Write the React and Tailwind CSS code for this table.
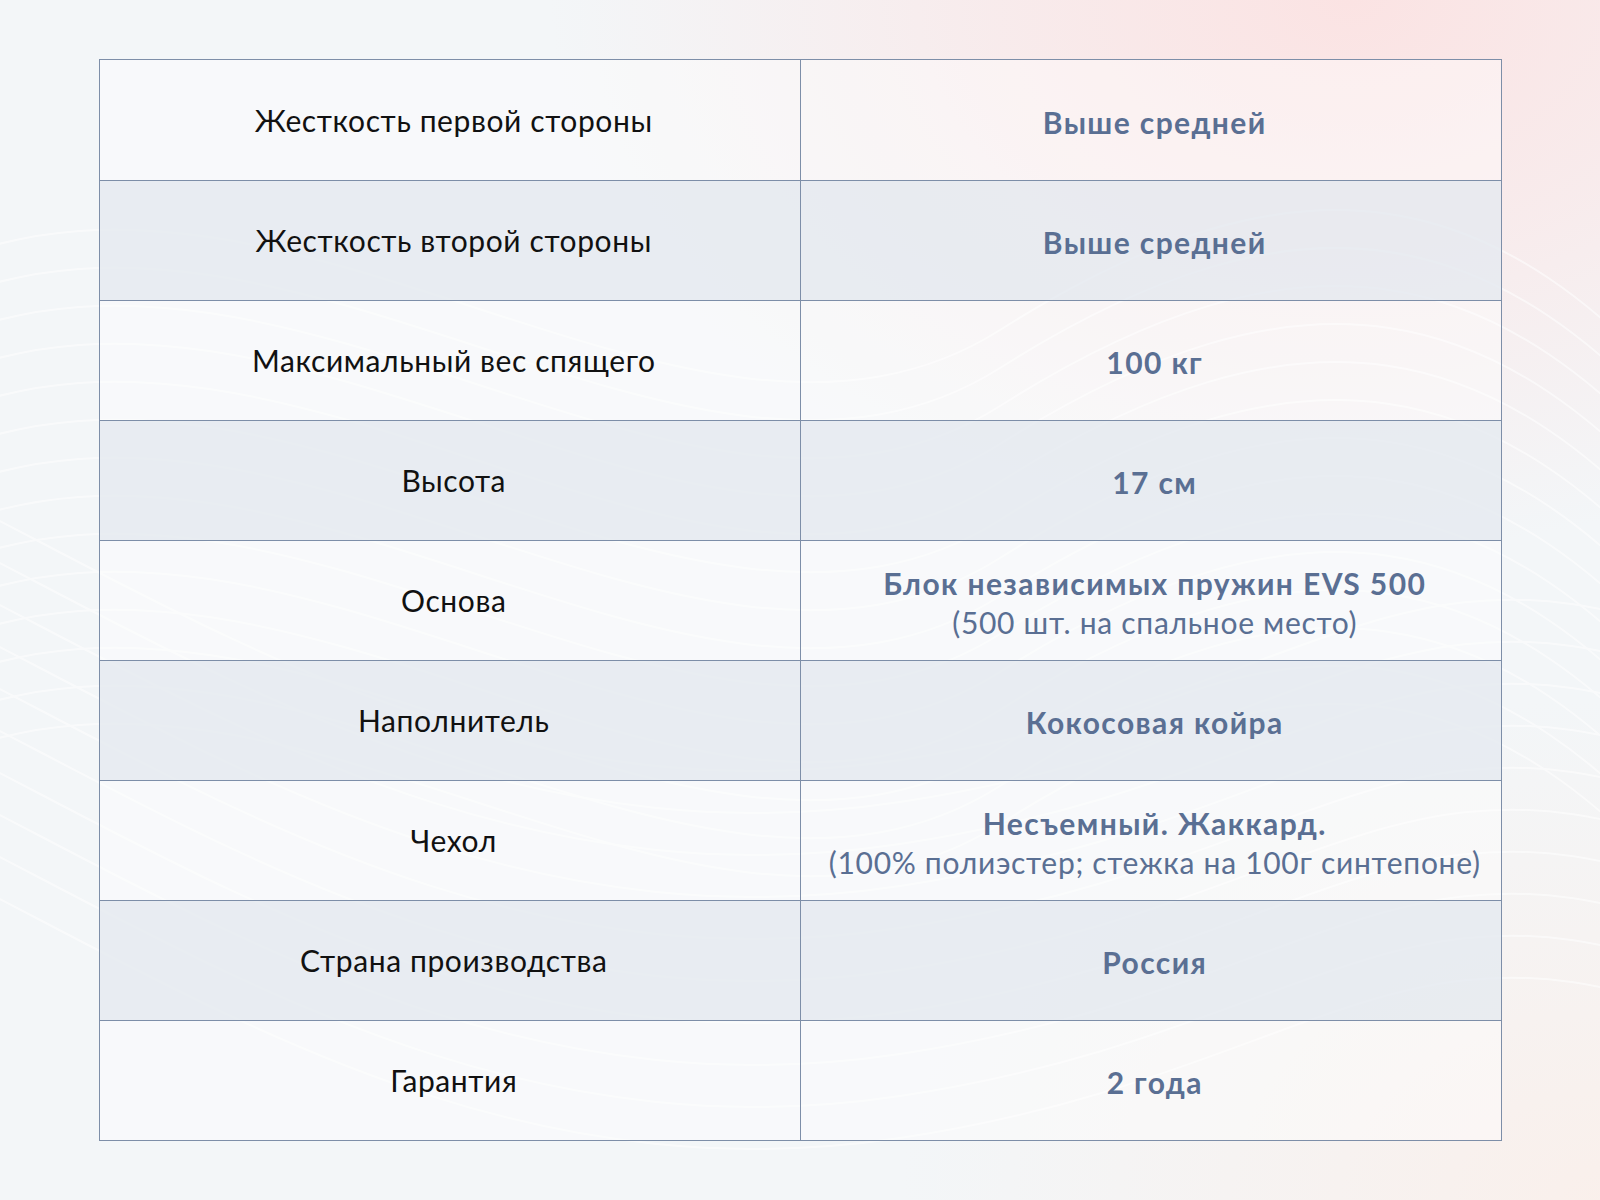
import React from "react";

const rows = [
  { label: "Жесткость первой стороны", value: "Выше средней" },
  { label: "Жесткость второй стороны", value: "Выше средней" },
  { label: "Максимальный вес спящего", value: "100 кг" },
  { label: "Высота", value: "17 см" },
  { label: "Основа", value: "Блок независимых пружин EVS 500", note: "(500 шт. на спальное место)" },
  { label: "Наполнитель", value: "Кокосовая койра" },
  { label: "Чехол", value: "Несъемный. Жаккард.", note: "(100% полиэстер; стежка на 100г синтепоне)" },
  { label: "Страна производства", value: "Россия" },
  { label: "Гарантия", value: "2 года" },
];

const Waves = () => {
  const lines = [];
  for (let i = 0; i < 14; i++) {
    const o = i * 38;
    lines.push(
      <path
        key={"a" + i}
        d={`M -50 ${260 + o} C 300 ${120 + o}, 700 ${520 + o}, 1000 ${330 + o} S 1500 ${180 + o}, 1700 ${420 + o}`}
      />
    );
  }
  for (let i = 0; i < 10; i++) {
    const o = i * 42;
    lines.push(
      <path
        key={"b" + i}
        d={`M -80 ${480 + o} C 200 ${620 + o}, 500 ${820 + o}, 900 ${760 + o} S 1400 ${520 + o}, 1700 ${640 + o}`}
      />
    );
  }
  return (
    <svg className="absolute inset-0 w-full h-full" viewBox="0 0 1600 1200" preserveAspectRatio="none">
      <g fill="none" stroke="white" strokeWidth="2" opacity="0.55">
        {lines}
      </g>
    </svg>
  );
};

const App = () => {
  return (
    <div className="relative w-[1600px] h-[1200px] overflow-hidden bg-[#f3f6f8] font-['Lato','Noto_Sans',sans-serif]">
      <div className="absolute inset-0 bg-[radial-gradient(ellipse_800px_550px_at_1350px_0px,#fbe3e3_0%,rgba(251,228,228,0.6)_45%,rgba(243,246,248,0)_100%)]" />
      <div className="absolute inset-0 bg-[radial-gradient(ellipse_700px_500px_at_1600px_1200px,rgba(251,238,232,0.8)_0%,rgba(243,246,248,0)_100%)]" />
      <Waves />
      <div className="relative pt-[59px] pl-[99px]">
        <div className="w-[1403px] border border-[#7d8ea8]">
          {rows.map((r, i) => (
            <div
              key={i}
              className={`grid grid-cols-2 h-[120px] ${i > 0 ? "border-t border-[#7d8ea8]" : ""} ${
                i % 2 === 1 ? "bg-[#e5eaf0]/80" : "bg-white/40"
              }`}
            >
              <div className="flex items-center justify-center pl-[8px] text-[30px] tracking-[0.6px] text-[#111] border-r border-[#7d8ea8]">
                {r.label}
              </div>
              <div className="flex flex-col items-center justify-center pl-[8px] pt-[4px] text-[30px] leading-[39px] text-[#5a6f93] text-center">
                <div className="font-bold tracking-[1.4px]">{r.value}</div>
                {r.note && <div className="font-normal tracking-[0.7px]">{r.note}</div>}
              </div>
            </div>
          ))}
        </div>
      </div>
    </div>
  );
};

export default App;
